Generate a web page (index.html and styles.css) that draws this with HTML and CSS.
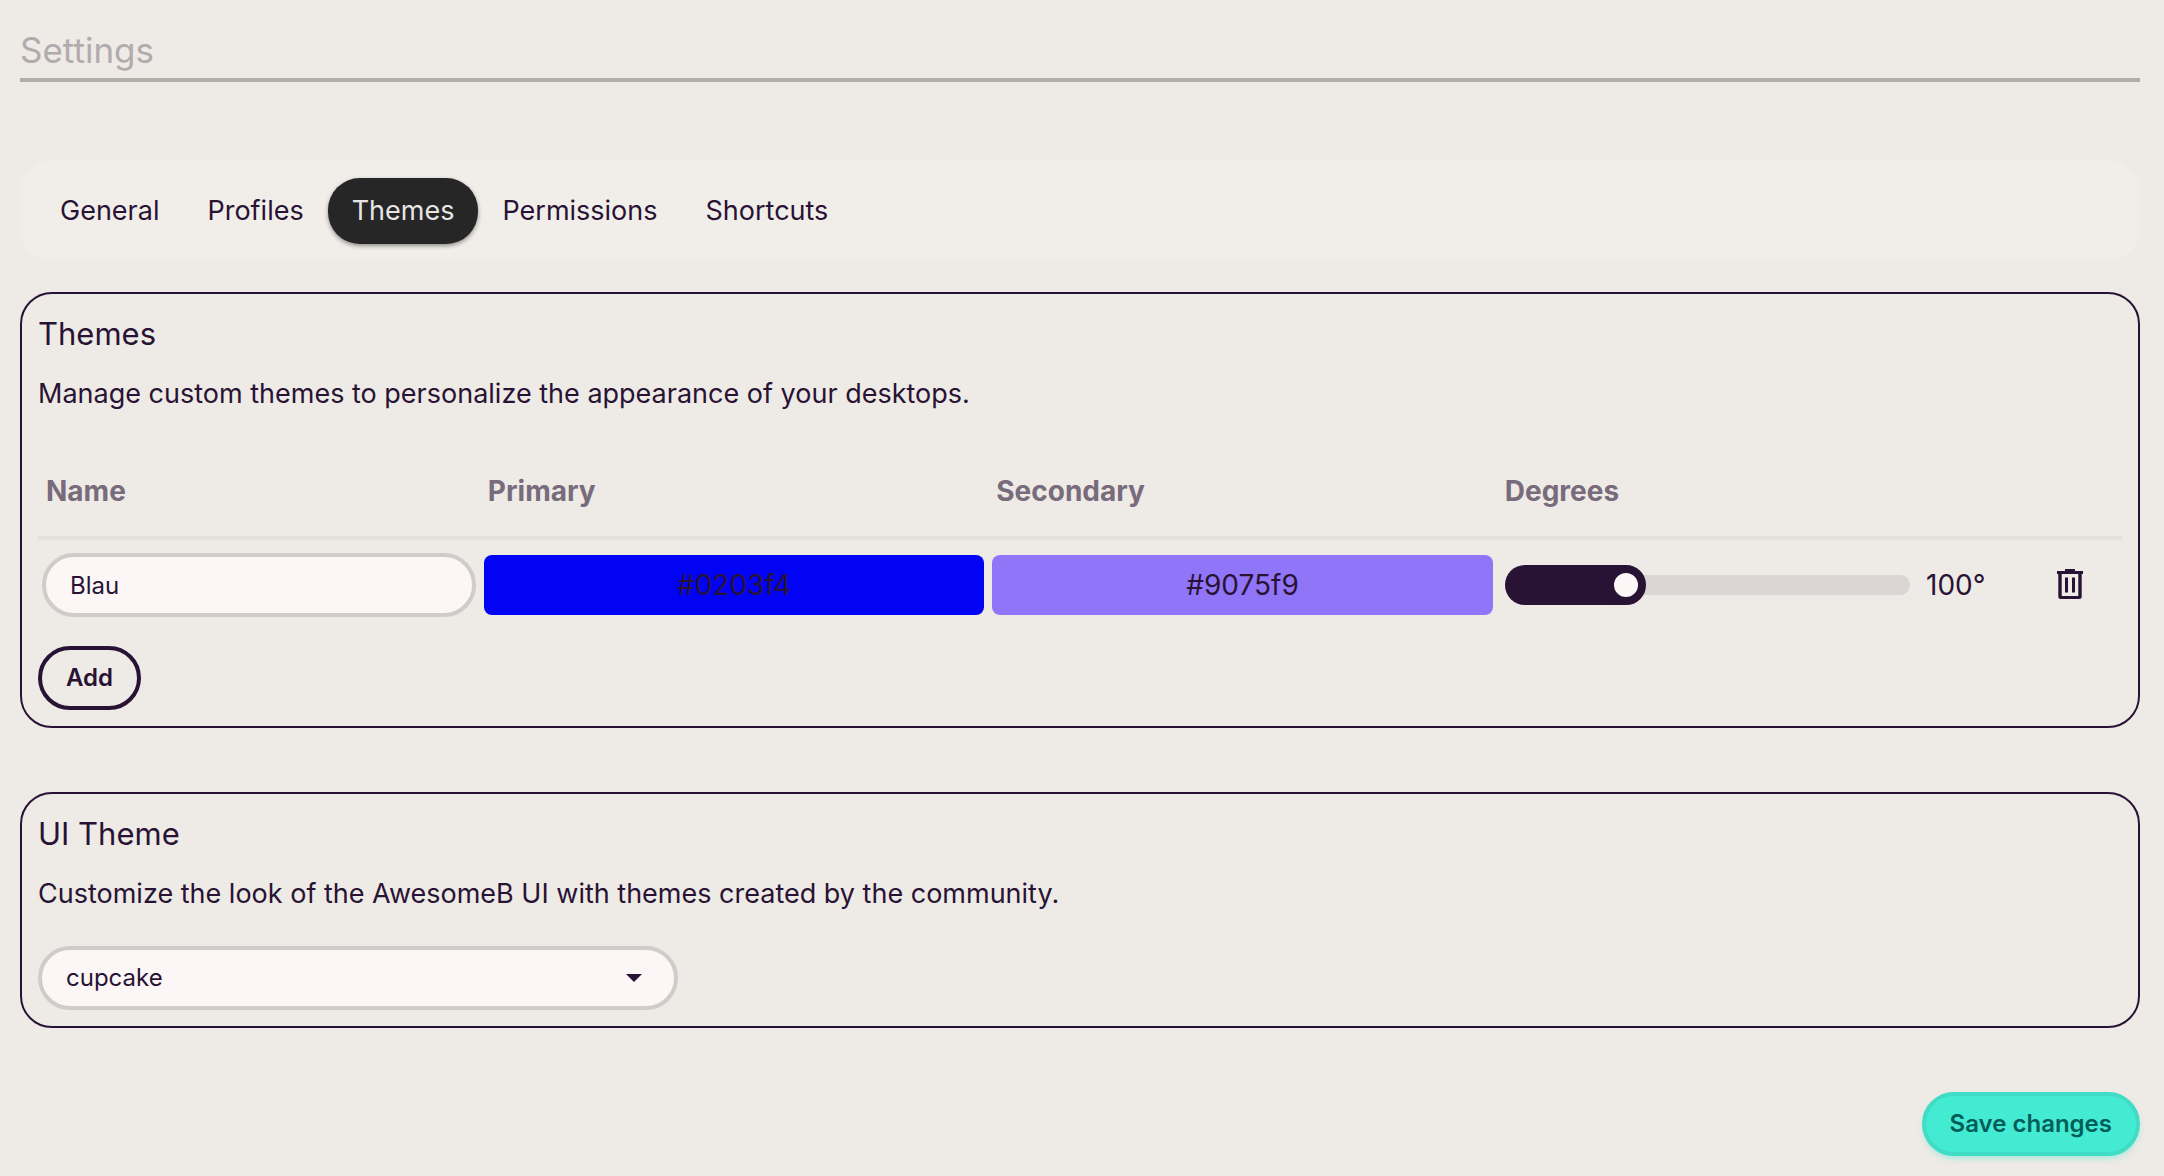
FILE: index.html
```html
<!DOCTYPE html>
<html lang="en">
<head>
<meta charset="utf-8">
<meta name="viewport" content="width=device-width, initial-scale=1">
<title>Settings</title>
<link rel="stylesheet" href="styles.css">
</head>
<body>
<main class="page">
  <h1 class="page-title">Settings</h1>

  <nav class="tabs" role="tablist" aria-label="Settings sections">
    <button class="tab" type="button" role="tab">General</button>
    <button class="tab" type="button" role="tab">Profiles</button>
    <button class="tab tab-active" type="button" role="tab" aria-selected="true">Themes</button>
    <button class="tab" type="button" role="tab">Permissions</button>
    <button class="tab" type="button" role="tab">Shortcuts</button>
  </nav>

  <section class="card">
    <h2 class="card-title">Themes</h2>
    <p class="card-text">Manage custom themes to personalize the appearance of your desktops.</p>
    <table class="theme-table">
      <colgroup>
        <col class="col-name">
        <col class="col-color">
        <col class="col-color">
        <col>
        <col class="col-action">
      </colgroup>
      <thead>
        <tr>
          <th scope="col">Name</th>
          <th scope="col">Primary</th>
          <th scope="col">Secondary</th>
          <th scope="col">Degrees</th>
          <td></td>
        </tr>
      </thead>
      <tbody>
        <tr>
          <td><input class="input" type="text" value="Blau" aria-label="Name"></td>
          <td><button class="swatch" type="button" style="background-color: #0203f4">#0203f4</button></td>
          <td><button class="swatch" type="button" style="background-color: #9075f9">#9075f9</button></td>
          <td>
            <div class="degrees">
              <input class="range" id="degrees" type="range" min="0" max="360" value="100" aria-label="Degrees" style="--value: 0.2778">
              <output class="degrees-value" for="degrees">100°</output>
            </div>
          </td>
          <td>
            <button class="icon-button" type="button" aria-label="Delete theme">
              <svg class="icon" viewBox="0 0 28 32" fill="currentColor" aria-hidden="true">
                <path fill-rule="evenodd" d="M9 1h10v2h8v3h-1.3v22.5q0 2.5-2.5 2.5H4.800q-2.500 0-2.500-2.500V6H1V3h8zM5.700 6v22h16.600V6zM9 9.500h3v15H9zM16 9.500h3v15h-3z"/>
              </svg>
            </button>
          </td>
        </tr>
      </tbody>
    </table>
    <button class="button button-outline" type="button">Add</button>
  </section>

  <section class="card">
    <h2 class="card-title">UI Theme</h2>
    <p class="card-text">Customize the look of the AwesomeB UI with themes created by the community.</p>
    <div class="select-wrap">
      <select class="input select" aria-label="UI Theme">
        <option selected>cupcake</option>
      </select>
      <svg class="select-arrow" viewBox="0 0 16 8" fill="currentColor" aria-hidden="true"><path d="M0 0h16L8 8z"/></svg>
    </div>
  </section>

  <div class="actions">
    <button class="button button-primary" type="submit">Save changes</button>
  </div>
</main>
</body>
</html>
```
FILE: styles.css
```css
:root {
  --base: #eeeae6;
  --ink: #291334;
  --field: #fcf7f6;
  --field-border: #d0cccb;
}

* {
  box-sizing: border-box;
}

body {
  margin: 0;
  background: var(--base);
  color: var(--ink);
  font-family: Inter, "Liberation Sans", sans-serif;
  font-size: 27px;
  line-height: 40px;
}

button,
input,
select {
  margin: 0;
  color: inherit;
  font: inherit;
}

button {
  cursor: pointer;
}

.page {
  padding: 24px 24px 20px 20px;
}

.page-title {
  margin: 0 0 78px;
  padding-bottom: 2px;
  border-bottom: 4px solid #b2adab;
  color: #b2abad;
  font-size: 35px;
  font-weight: 400;
  line-height: 52px;
}

.tabs {
  display: flex;
  margin-bottom: 32px;
  padding: 18px 16px 16px;
  border-radius: 32px;
  background: #f1eeea;
}

.tab {
  height: 66px;
  padding: 0 24px;
  border: 0;
  border-radius: 32px;
  background: none;
}

.tab-active {
  background: #262626;
  box-shadow: 0 2px 4px rgb(0 0 0 / 40%);
  color: #e6e6e6;
}

.card {
  margin-bottom: 64px;
  padding: 16px;
  border: 2px solid var(--ink);
  border-radius: 32px;
}

.card-title {
  margin: 0 0 16px;
  font-size: 31px;
  font-weight: 400;
  line-height: 48px;
}

.card-text {
  margin: 0 0 32px;
}

.theme-table {
  width: 100%;
  margin-bottom: 16px;
  border-collapse: separate;
  border-spacing: 0;
  font-size: 28px;
  table-layout: fixed;
}

.col-name {
  width: 21.2%;
}

.col-color {
  width: 24.4%;
}

.col-action {
  width: 104px;
}

.theme-table thead th,
.theme-table thead td {
  height: 94px;
  padding: 0 8px;
  border-bottom: 4px solid #e4e0dd;
  color: #776b7c;
  font-weight: 700;
  text-align: left;
}

.theme-table tbody td {
  height: 90px;
  padding: 0 4px;
  text-align: center;
}

.input {
  display: block;
  width: 100%;
  height: 64px;
  padding: 0 24px;
  border: 4px solid var(--field-border);
  border-radius: 32px;
  background: var(--field);
  font-size: 24px;
}

.swatch {
  display: block;
  width: 100%;
  height: 60px;
  padding: 0;
  border: 0;
  border-radius: 8px;
}

.degrees {
  display: flex;
  align-items: center;
  gap: 16px;
  padding: 0 4px;
}

.range {
  flex: 1;
  min-width: 0;
  height: 40px;
  appearance: none;
  border-radius: 20px;
  background:
    linear-gradient(var(--ink), var(--ink)) left / calc((100% - 40px) * var(--value) + 20px) 100% no-repeat,
    radial-gradient(circle at 10px 10px, #dbd5d5 10px, transparent 10px) right / 20px 20px no-repeat,
    linear-gradient(#dbd5d5, #dbd5d5) left / calc(100% - 10px) 20px no-repeat;
}

.range::-webkit-slider-thumb {
  width: 40px;
  height: 40px;
  appearance: none;
  border: 8px solid var(--ink);
  border-radius: 50%;
  background: var(--field);
}

.degrees-value {
  width: 84px;
  text-align: left;
}

.icon-button {
  display: inline-flex;
  padding: 8px;
  border: 0;
  background: none;
}

.icon {
  width: 28px;
  height: 32px;
}

.button {
  display: block;
  height: 64px;
  padding: 0 24px;
  border: 4px solid var(--ink);
  border-radius: 32px;
  font-size: 24px;
  font-weight: 600;
}

.button-outline {
  background: none;
}

.button-primary {
  border-color: #40dcc5;
  background: #44ebd3;
  box-shadow: 0 4px 6px -2px rgb(68 235 211 / 50%);
  color: #005d58;
}

.select-wrap {
  display: grid;
  align-items: center;
  width: 640px;
  max-width: 100%;
}

.select {
  grid-area: 1 / 1;
  appearance: none;
}

.select-arrow {
  grid-area: 1 / 1;
  justify-self: end;
  width: 16px;
  height: 8px;
  margin-right: 36px;
  pointer-events: none;
}

.actions {
  display: flex;
  justify-content: flex-end;
}
```
